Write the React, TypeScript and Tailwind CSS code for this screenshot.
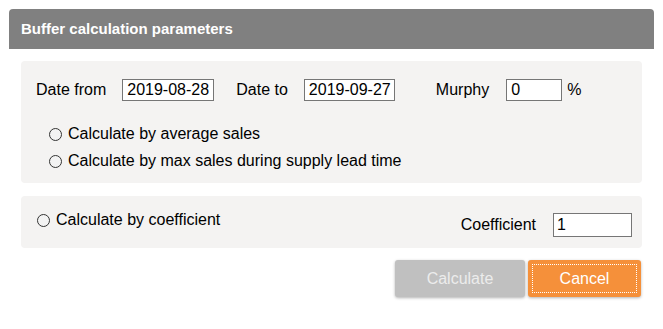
const font = { fontFamily: '"Liberation Sans", Arial, sans-serif' };

const Radio = () => (
  <span className="inline-block w-[13px] h-[13px] rounded-full border border-[#333333] bg-[#f3f3f3] shrink-0" />
);

const Field = (props: { value: string; width: string }) => (
  <div
    className={`${props.width} h-[22px] border border-[#767676] bg-white pl-[4px] text-[16px] leading-[20px] text-black whitespace-nowrap overflow-hidden`}
  >
    {props.value}
  </div>
);

const App = () => {
  return (
    <div className="w-[663px] h-[329px] bg-white pt-[9px] px-[9px]" style={font}>
      <div className="w-[645px] h-[40px] bg-[#808080] rounded-t-[4px] flex items-center pl-[12px]">
        <p className="text-white font-bold text-[15px]">Buffer calculation parameters</p>
      </div>

      <div className="px-[12px] pt-[12px] flex flex-col">
        <div className="h-[122px] bg-[#f4f3f2] rounded-[4px] pt-[18px] pl-[15px]">
          <div className="flex items-center h-[22px] text-[16px] text-black">
            <span>Date from</span>
            <div className="ml-[16px]">
              <Field value="2019-08-28" width="w-[92px]" />
            </div>
            <span className="ml-[22px]">Date to</span>
            <div className="ml-[16px]">
              <Field value="2019-09-27" width="w-[91px]" />
            </div>
            <span className="ml-[41px]">Murphy</span>
            <div className="ml-[17px]">
              <Field value="0" width="w-[56px]" />
            </div>
            <span className="ml-[5px]">%</span>
          </div>
          <div className="mt-[23px] pl-[13px] flex flex-col gap-[7px] text-[16px] text-black">
            <div className="flex items-center gap-[6px] h-[20px]">
              <Radio />
              <span>Calculate by average sales</span>
            </div>
            <div className="flex items-center gap-[6px] h-[20px]">
              <Radio />
              <span>Calculate by max sales during supply lead time</span>
            </div>
          </div>
        </div>

        <div className="mt-[13px] h-[52px] bg-[#f4f3f2] rounded-[4px] flex items-center justify-between pl-[16px] pr-[10px] text-[16px] text-black">
          <div className="flex items-center gap-[6px] mb-[4px]">
            <Radio />
            <span>Calculate by coefficient</span>
          </div>
          <div className="flex items-center mt-[5px]">
            <span>Coefficient</span>
            <div className="ml-[17px] w-[79px] h-[24px] border border-[#767676] bg-white px-[3px] leading-[22px]">
              1
            </div>
          </div>
        </div>

        <div className="mt-[12px] flex justify-end gap-[3px] pr-[1px]">
          <button className="w-[130px] h-[37px] rounded-[3px] bg-[#c0c0c0] text-[#ececec] text-[16px] shadow-[0_1px_3px_rgba(0,0,0,0.3)]">
            Calculate
          </button>
          <button className="w-[113px] h-[37px] rounded-[3px] bg-[#f5903a] text-white text-[16px] p-[4px] shadow-[0_1px_3px_rgba(0,0,0,0.3)]">
            <span className="flex items-center justify-center w-full h-full border border-dotted border-white">
              Cancel
            </span>
          </button>
        </div>
      </div>
    </div>
  );
};

export default App;
